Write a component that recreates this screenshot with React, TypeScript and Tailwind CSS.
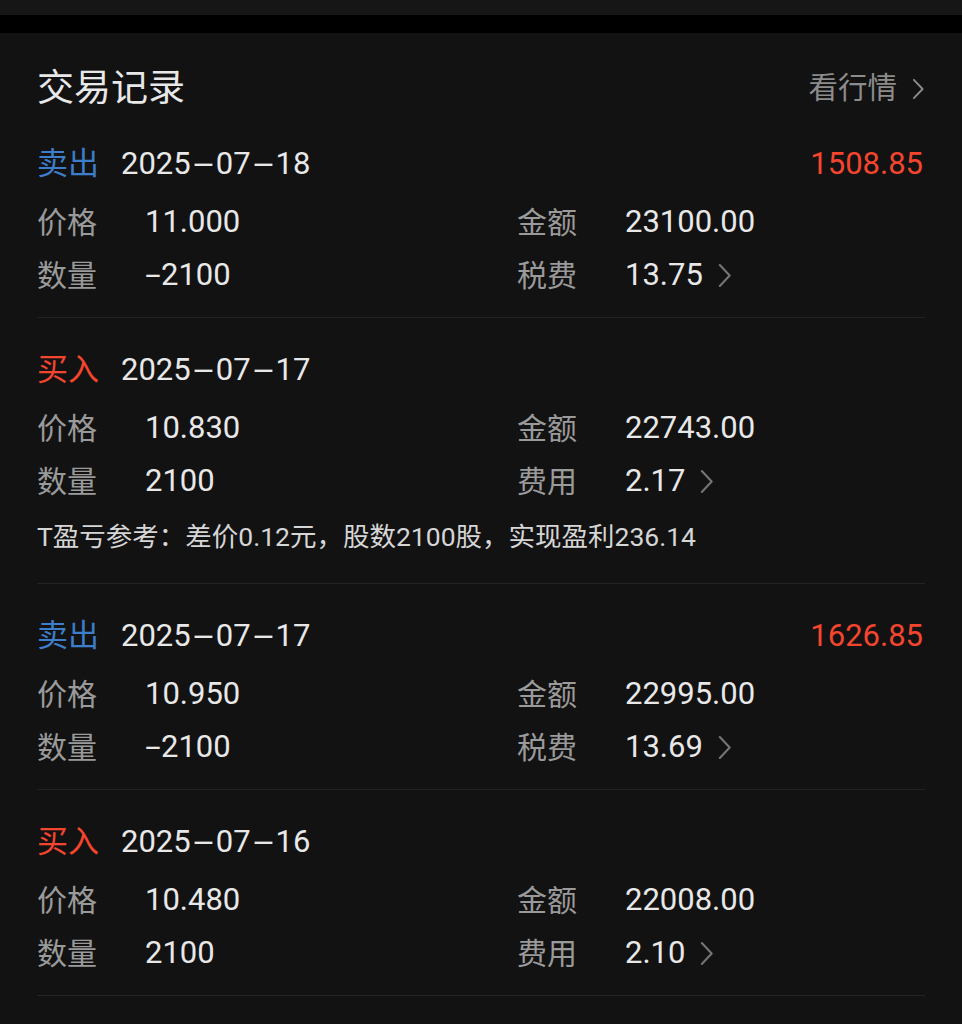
import React from "react";

type Trade = {
  side: "卖出" | "买入";
  date: string;
  profit?: string;
  price: string;
  amount: string;
  qty: string;
  feeLabel: string;
  fee: string;
  note?: string;
};

const trades: Trade[] = [
  { side: "卖出", date: "2025-07-18", profit: "1508.85", price: "11.000", amount: "23100.00", qty: "-2100", feeLabel: "税费", fee: "13.75" },
  {
    side: "买入",
    date: "2025-07-17",
    price: "10.830",
    amount: "22743.00",
    qty: "2100",
    feeLabel: "费用",
    fee: "2.17",
    note: "T盈亏参考：差价0.12元，股数2100股，实现盈利236.14",
  },
  { side: "卖出", date: "2025-07-17", profit: "1626.85", price: "10.950", amount: "22995.00", qty: "-2100", feeLabel: "税费", fee: "13.69" },
  { side: "买入", date: "2025-07-16", price: "10.480", amount: "22008.00", qty: "2100", feeLabel: "费用", fee: "2.10" },
];

const Chevron = ({ className }: { className?: string }) => (
  <svg viewBox="0 0 14 24" className={className} fill="none" stroke="currentColor" strokeWidth={2} strokeLinecap="round" strokeLinejoin="round">
    <path d="M2.5 2l9.5 10-9.5 10" />
  </svg>
);

// wide dash like the app's number font
const Dashed = ({ text }: { text: string }) => {
  const parts = text.split("-");
  return (
    <>
      {parts.map((p, i) => (
        <React.Fragment key={i}>
          {i > 0 && <span className="inline-block w-[25px] text-center scale-x-[2.4]">-</span>}
          {p}
        </React.Fragment>
      ))}
    </>
  );
};

const Qty = ({ text }: { text: string }) =>
  text.startsWith("-") ? (
    <>
      <span className="inline-block w-[16px] text-center scale-x-[1.8]">-</span>
      {text.slice(1)}
    </>
  ) : (
    <>{text}</>
  );

const Cell = ({ label, children }: { label: string; children: React.ReactNode }) => (
  <div className="flex items-center h-[53px]">
    <div className="w-[108px] text-[30px] text-[#9a9a9a]">{label}</div>
    <div className="flex items-center text-[31px] text-[#e8e8e8]">{children}</div>
  </div>
);

const TradeItem = ({ t }: { t: Trade }) => (
  <div className="pt-[32px] pb-[15px] border-b border-[#232323]">
    <div className="flex items-center justify-between h-[40px]">
      <div className="flex items-center">
        <span className={t.side === "卖出" ? "text-[31px] text-[#3d7dca]" : "text-[31px] text-[#f4452f]"}>{t.side}</span>
        <span className="ml-[22px] text-[31px] text-[#e8e8e8]">
          <Dashed text={t.date} />
        </span>
      </div>
      {t.profit && <span className="text-[31px] text-[#f4452f] pr-[2px]">{t.profit}</span>}
    </div>
    <div className="mt-[12px] grid grid-cols-[480px_1fr]">
      <Cell label="价格">{t.price}</Cell>
      <Cell label="金额">{t.amount}</Cell>
      <Cell label="数量">
        <Qty text={t.qty} />
      </Cell>
      <Cell label={t.feeLabel}>
        {t.fee}
        <Chevron className="ml-[14px] w-[15px] h-[25px] text-[#757575]" />
      </Cell>
    </div>
    {t.note && <div className="mt-[9px] mb-[11px] h-[40px] leading-[40px] text-[26.5px] text-[#d6d6d6]">{t.note}</div>}
  </div>
);

export default function App() {
  return (
    <div className="w-[962px] min-h-[1024px] bg-[#121212] font-['Roboto','Noto_Sans_CJK_SC',sans-serif]">
      <div className="h-[15px] bg-[#161616]" />
      <div className="h-[18px] bg-black" />
      <div className="px-[37px]">
        <div className="flex items-center justify-between h-[79px] pt-[32px]">
          <span className="text-[37px] text-[#e8e8e8]">交易记录</span>
          <span className="flex items-center text-[29.5px] text-[#8c8c8c]">
            看行情
            <Chevron className="ml-[14px] w-[14px] h-[22px] text-[#8c8c8c]" />
          </span>
        </div>
        {trades.map((t, i) => (
          <TradeItem key={i} t={t} />
        ))}
      </div>
    </div>
  );
}
